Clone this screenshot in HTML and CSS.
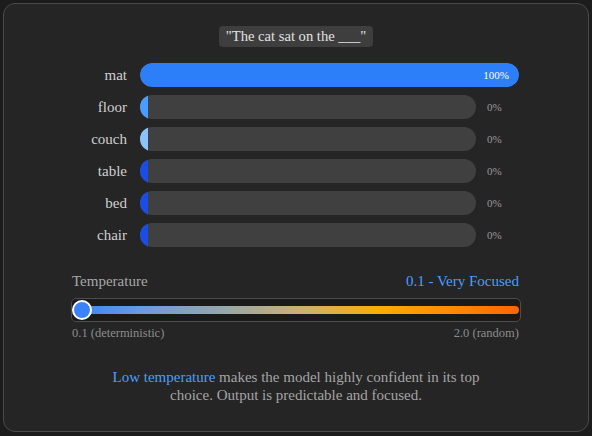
FILE: index.html
```html
<!DOCTYPE html>
<html>
<head>
<meta charset="utf-8">
<link rel="stylesheet" href="styles.css">
</head>
<body>
<div class="card">
  <div class="prompt">"The cat sat on the ___"</div>
  <div class="rows">
    <div class="row">
      <span class="label">mat</span>
      <div class="track full"><div class="fill c-main" style="width:100%"><span class="pct-in">100%</span></div></div>
    </div>
    <div class="row">
      <span class="label">floor</span>
      <div class="track"><div class="fill c-floor"></div></div>
      <span class="pct">0%</span>
    </div>
    <div class="row">
      <span class="label">couch</span>
      <div class="track"><div class="fill c-couch"></div></div>
      <span class="pct">0%</span>
    </div>
    <div class="row">
      <span class="label">table</span>
      <div class="track"><div class="fill c-deep"></div></div>
      <span class="pct">0%</span>
    </div>
    <div class="row">
      <span class="label">bed</span>
      <div class="track"><div class="fill c-deep"></div></div>
      <span class="pct">0%</span>
    </div>
    <div class="row">
      <span class="label">chair</span>
      <div class="track"><div class="fill c-deep"></div></div>
      <span class="pct">0%</span>
    </div>
  </div>
  <div class="temp">
    <div class="temp-head">
      <span class="temp-title">Temperature</span>
      <span class="temp-value">0.1 - Very Focused</span>
    </div>
    <div class="slider">
      <div class="gradient"></div>
      <div class="thumb"></div>
    </div>
    <div class="temp-ends">
      <span>0.1 (deterministic)</span>
      <span>2.0 (random)</span>
    </div>
  </div>
  <p class="explain"><span class="hl">Low temperature</span> makes the model highly confident in its top<br>choice. Output is predictable and focused.</p>
</div>
</body>
</html>
```
FILE: styles.css
```css
* { box-sizing: border-box; }
html, body { margin: 0; padding: 0; }
body {
  background: #1c1c1c;
  width: 592px;
  height: 436px;
  padding: 3px;
  font-family: "Liberation Serif", "DejaVu Serif", serif;
}
.card {
  width: 586px;
  height: 429px;
  background: #252525;
  border: 1px solid #4a4a4a;
  border-radius: 12px;
  display: flex;
  flex-direction: column;
  align-items: center;
  padding-top: 22px;
}
.prompt {
  background: #3e3e3e;
  color: #e2e2e2;
  font-size: 14.6px;
  line-height: 21px;
  height: 21px;
  padding: 0 7px;
  border-radius: 4px;
}
.rows {
  width: 450px;
  margin-top: 16px;
  display: flex;
  flex-direction: column;
  gap: 8px;
}
.row {
  display: grid;
  grid-template-columns: 56px 1fr 34px;
  column-gap: 12px;
  align-items: center;
  height: 24px;
}
.label {
  text-align: right;
  color: #d0d0d0;
  font-size: 15px;
}
.track {
  height: 24px;
  background: #404040;
  border-radius: 12px;
  overflow: hidden;
  margin-left: 1px;
  margin-right: -1px;
}
.track.full {
  grid-column: 2 / 4;
  margin-right: 2px;
}
.fill {
  height: 100%;
  width: 8px;
  border-radius: 12px 0 0 12px;
}
.c-main { background: #2d7ff9; border-radius: 12px; display: flex; justify-content: flex-end; align-items: center; padding-right: 10px; }
.c-floor { background: #4a9dff; }
.c-couch { background: #8dc2ff; }
.c-deep { background: #1a4de6; }
.pct-in {
  color: #ffffff;
  font-size: 11px;
}
.pct {
  color: #9a9a9a;
  font-size: 11px;
}
.temp {
  width: 450px;
  margin-top: 25px;
}
.temp-head {
  display: flex;
  justify-content: space-between;
  font-size: 15px;
  line-height: 18px;
  padding: 0 2px 0 1px;
}
.temp-title { color: #a8a8a8; }
.temp-value { color: #4a9eff; }
.slider {
  position: relative;
  margin-top: 8px;
  height: 24px;
  border: 1px solid #4c4c4c;
  background: #1a1a1a;
  border-radius: 5px;
  padding: 7px 1px;
}
.gradient {
  height: 8px;
  border-radius: 4px;
  background: linear-gradient(90deg, #3b82f6 0%, #6a9ae0 15%, #9aa8a6 35%, #d0b070 52%, #f5b000 68%, #ff8a00 85%, #ff6400 100%);
}
.thumb {
  position: absolute;
  left: 0px;
  top: 1px;
  width: 20px;
  height: 20px;
  border-radius: 50%;
  background: #3b82f6;
  border: 2px solid #ffffff;
}
.temp-ends {
  display: flex;
  justify-content: space-between;
  color: #8c8c8c;
  font-size: 12.5px;
  margin-top: 4px;
  padding: 0 2px 0 1px;
}
.explain {
  margin: 27px 0 0;
  text-align: center;
  color: #a4a4a4;
  font-size: 15px;
  line-height: 18px;
}
.hl { color: #4a9eff; }
```
